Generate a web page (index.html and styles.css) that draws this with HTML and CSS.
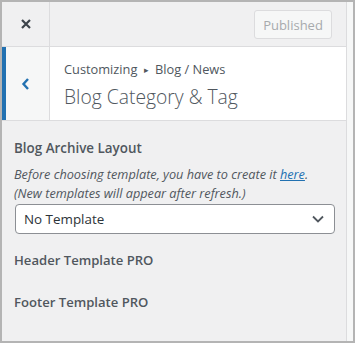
FILE: index.html
```html
<!DOCTYPE html>
<html><head><meta charset="utf-8"><link rel="stylesheet" href="styles.css"></head>
<body>
<div class="frame">
<div class="panel">
  <div class="header">
    <div class="close"><svg width="12" height="12" viewBox="0 0 12 12"><path d="M2 2L10 10M10 2L2 10" stroke="#3c434a" stroke-width="2.2" fill="none"/></svg></div>
    <div class="actions"><button class="publish" disabled>Published</button></div>
  </div>
  <div class="section-head">
    <div class="back"><svg width="10" height="14" viewBox="0 0 10 14"><path d="M7 2L2.5 7L7 12" stroke="#2271b1" stroke-width="2.4" fill="none"/></svg></div>
    <div class="titles">
      <div class="crumb">Customizing <span class="arrow">&#9656;</span> Blog / News</div>
      <div class="title">Blog Category &amp; Tag</div>
    </div>
  </div>
  <div class="controls">
    <div class="control">
      <div class="label">Blog Archive Layout</div>
      <div class="desc">Before choosing template, you have to create it <a href="#">here</a>.<br>(New templates will appear after refresh.)</div>
      <div class="select"><span>No Template</span><svg width="14" height="10" viewBox="0 0 14 10"><path d="M2 2.5L7 7.5L12 2.5" stroke="#50575e" stroke-width="1.8" fill="none"/></svg></div>
    </div>
    <div class="control label pro">Header Template PRO</div>
    <div class="control label pro next">Footer Template PRO</div>
  </div>
</div>
<div class="strip"></div>
</div>
</body></html>
```
FILE: styles.css
```css
html, body {margin: 0; padding: 0;}
body {font-family: "Open Sans", "Noto Sans", sans-serif; color: #50575e; background: #b4b4b4;}
.frame {box-sizing: border-box; width: 355px; height: 343px; border: 2px solid #b4b4b4; display: flex; background: #f0f0f1;}
.panel {width: 344px; border-right: 1px solid #dcdcde; background: #f0f0f1; display: flex; flex-direction: column;}
.strip {flex: 1; background: #f6f7f7;}
.header {height: 44px; border-bottom: 1px solid #dcdcde; display: flex;}
.close {width: 47px; border-right: 1px solid #dcdcde; display: flex; align-items: center; justify-content: center;}
.actions {flex: 1; display: flex; align-items: center; justify-content: flex-end; padding-right: 14px;}
.publish {font-family: inherit; font-size: 13px; height: 29px; width: 78px; padding: 0; margin-top: 1px; color: #a7aaad; background: #f6f7f7; border: 1px solid #dcdcde; border-radius: 3px;}
.section-head {height: 73px; background: #fff; border-bottom: 1px solid #dcdcde; display: flex;}
.back {width: 43px; border-left: 4px solid #2271b1; border-right: 1px solid #dcdcde; background: #f6f7f7; display: flex; align-items: center; justify-content: center;}
.back svg {margin-right: 3px;}
.titles {padding: 10px 0 0 14px;}
.crumb {font-size: 12.8px; line-height: 24px;}
.arrow {font-size: 9px; position: relative; top: -1px; margin: 0 3px;}
.title {font-size: 19.3px; font-weight: 300; line-height: 27px;}
.controls {padding: 17px 11px 0 12px;}
.label {font-size: 13.4px; font-weight: 600; line-height: 20px;}
.desc {font-size: 12.7px; font-style: italic; line-height: 19px; margin-top: 7px;}
.desc a {color: #2271b1;}
.select {box-sizing: border-box; height: 30px; margin: 1px 0 0 1px; border: 1px solid #8c8f94; border-radius: 4px; background: #fff; display: flex; align-items: center; justify-content: space-between; padding: 0 9px 0 8px; font-size: 13.4px; color: #2c3338;}
.pro {font-size: 13.1px; margin-top: 16px;}
.next {margin-top: 22px;}
```
